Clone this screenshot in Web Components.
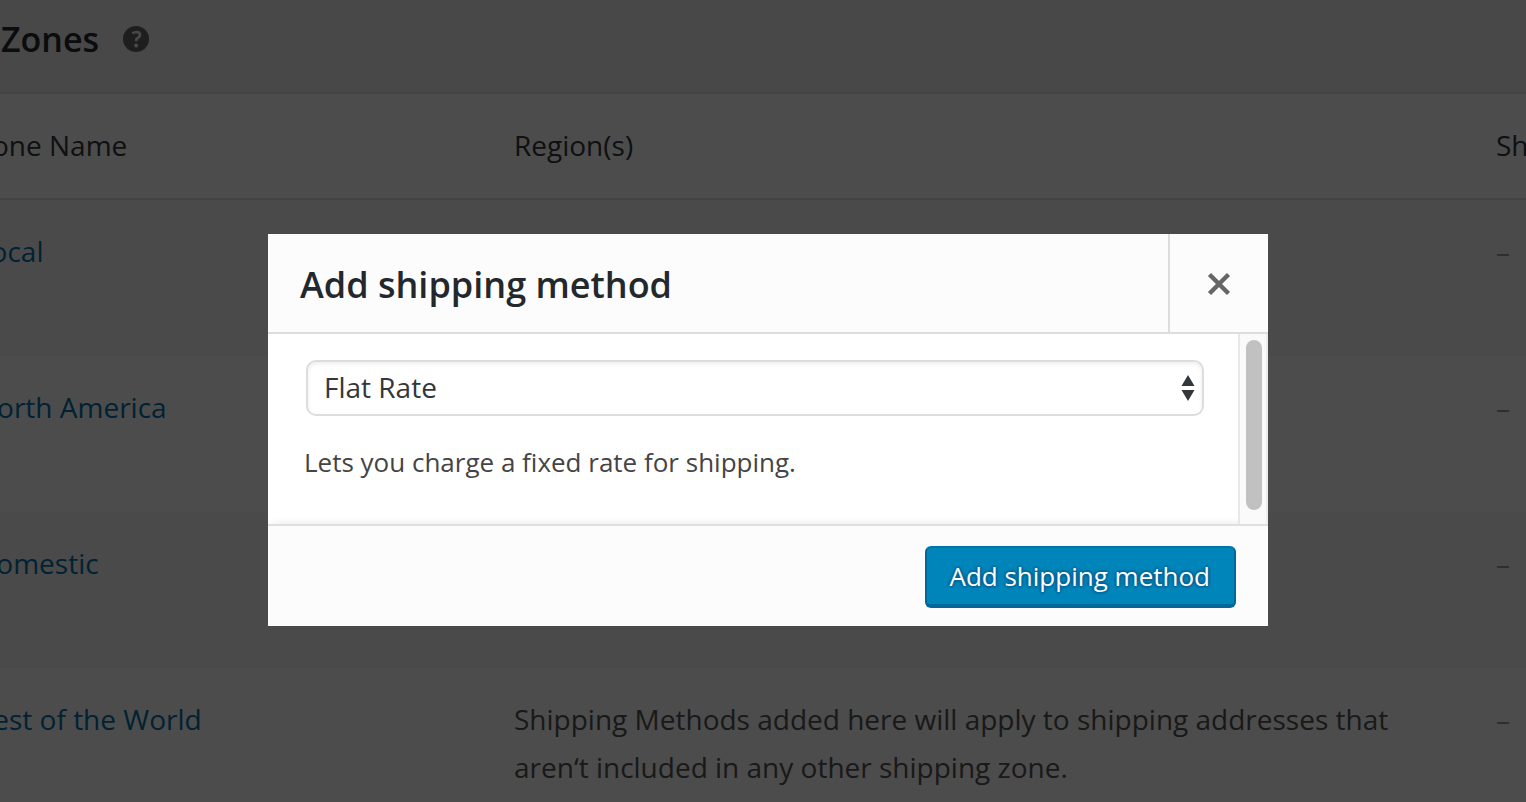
<!DOCTYPE html>
<html lang="en">
<head>
<meta charset="utf-8">
<title>Shipping Zones</title>
<style>
html,body{height:100%}
body{margin:0;overflow:hidden;background:#f1f1f1;font-family:"Open Sans",sans-serif;font-size:28px;line-height:48px;color:#555}
</style>
</head>
<body>
<shipping-page>
  <page-heading>Zones</page-heading>
  <zones-table></zones-table>
</shipping-page>
<modal-backdrop>
  <shipping-modal heading="Add shipping method">
    <method-picker></method-picker>
    <primary-button slot="footer">Add shipping method</primary-button>
  </shipping-modal>
</modal-backdrop>
<script>
const define = (name, html, setup) => customElements.define(name, class extends HTMLElement {
  constructor() {
    super();
    this.attachShadow({ mode: "open" }).innerHTML = html;
  }
  connectedCallback() { if (setup) setup(this, this.shadowRoot); }
});

define("shipping-page", `
<style>
:host{display:block;height:100%;overflow:hidden}
</style><slot></slot>`);

define("page-heading", `
<style>
:host{display:flex;align-items:center;gap:24px;height:78px;padding:0 0 14px 1px}
h2{margin:0;font-size:34px;font-weight:600;line-height:48px;color:#23282d}
button{border:0;padding:0;background:none;display:flex}
svg{width:26px;height:26px;display:block}
</style>
<h2><slot></slot></h2>
<button aria-label="Help"><svg viewBox="0 0 26 26"><circle cx="13" cy="13" r="13" fill="#666"/><path d="M9.300 7.300Q11.400 6 13.400 6Q17 6 17 9Q17 10.800 14.800 12Q13.200 12.900 13.200 14V15.300" fill="none" stroke="#f1f1f1" stroke-width="2.700"/><circle cx="13.100" cy="19.500" r="2" fill="#f1f1f1"/></svg></button>`);

define("zones-table", `
<style>
:host{display:block;margin:0 -500px 0 -44px;border-top:2px solid #e5e5e5;background:#fff}
table{width:100%;border-collapse:separate;border-spacing:0;table-layout:fixed}
th,td{text-align:left;vertical-align:top;font-weight:400;padding:27px 20px 29px}
th{color:#32373c;height:48px;border-bottom:2px solid #e1e1e1}
td{height:100px}
tbody tr:nth-child(odd){background:#f9f9f9}
.name{width:498px}.region{width:942px}
.none{color:#999}
a{color:#0073aa;text-decoration:none}
</style>
<table>
<thead><tr><th class="name">Zone Name</th><th class="region">Region(s)</th><th>Shipping Method(s)</th></tr></thead>
<tbody>
<tr><td><a href="#local">Local</a></td><td></td><td class="none">–</td></tr>
<tr><td><a href="#na">North America</a></td><td></td><td class="none">–</td></tr>
<tr><td><a href="#domestic">Domestic</a></td><td></td><td class="none">–</td></tr>
<tr><td><a href="#rest">Rest of the World</a></td><td>Shipping Methods added here will apply to shipping addresses that aren‘t included in any other shipping zone.</td><td class="none">–</td></tr>
</tbody></table>`);

define("modal-backdrop", `
<style>
:host{position:fixed;inset:0;display:flex;align-items:center;justify-content:center;box-sizing:border-box;padding:58px 0 0 10px;background:rgba(0,0,0,.7)}
</style><slot></slot>`);

define("shipping-modal", `
<style>
:host{display:block;width:1000px;max-width:100%;background:#fff}
header{display:flex;background:#fcfcfc;border-bottom:2px solid #ddd}
h1{flex:1;margin:0;padding:27px 32px 23px;font-size:36px;font-weight:600;line-height:48px;color:#23282d}
.close{width:100px;border:0;border-left:2px solid #ddd;background:none;padding:2px 0 0;display:grid;place-items:center}
.close svg{width:24px;height:24px}
.body{display:flex;height:190px}
.content{flex:1}
.track{width:16px;padding:6px 4px 14px 6px;border-left:2px solid #e8e8e8;border-right:2px solid #ededed;background:#fafafa}
.thumb{height:100%;border-radius:8px;background:#c1c1c1}
footer{display:flex;justify-content:flex-end;padding:20px 32px 18px;background:#fcfcfc;border-top:2px solid #dfdfdf;box-shadow:0 -4px 8px -4px rgba(0,0,0,.1)}
</style>
<section role="dialog" aria-labelledby="t">
<header><h1 id="t"></h1><button class="close" aria-label="Close"><svg viewBox="0 0 24 24"><path d="M2.500 2.500L21.500 21.500M21.500 2.500L2.500 21.500" stroke="#666" stroke-width="4.500"/></svg></button></header>
<div class="body"><div class="content"><slot></slot></div><div class="track"><div class="thumb"></div></div></div>
<footer><slot name="footer"></slot></footer>
</section>`, (el, root) => { root.querySelector("h1").textContent = el.getAttribute("heading"); });

define("method-picker", `
<style>
:host{display:block;padding:26px 34px 0 38px}
.field{display:grid;align-items:center}
.field>*{grid-area:1/1}
select{appearance:none;width:100%;height:56px;margin:0;padding:0 40px 2px 16px;border:2px solid #ddd;border-radius:10px;background:#fff;box-shadow:inset 0 2px 4px rgba(0,0,0,.07);font:inherit;color:#32373c}
svg{width:14px;height:26px;justify-self:end;margin-right:9px;pointer-events:none}
p{margin:24px 0 0 -2px;font-size:26px;line-height:44px;color:#444}
</style>
<div class="field"><select aria-label="Shipping method"><option>Flat Rate</option></select>
<svg viewBox="0 0 14 26"><path d="M7 0L13.500 11H.5ZM.5 15H13.500L7 26Z" fill="#32373c"/></svg></div>
<p>Lets you charge a fixed rate for shipping.</p>`);

define("primary-button", `
<style>
:host{display:block}
button{height:62px;padding:0 24px 0 22px;border:2px solid;border-color:#0073aa #006799 #006799;border-bottom-width:4px;border-radius:6px;background:#0085ba;color:#fff;font-family:inherit;font-size:26px;font-weight:500;line-height:56px;text-shadow:0 -2px 2px #006799,2px 0 2px #006799,0 2px 2px #006799,-2px 0 2px #006799}
</style><button type="button"><slot></slot></button>`);
</script>
</body>
</html>
